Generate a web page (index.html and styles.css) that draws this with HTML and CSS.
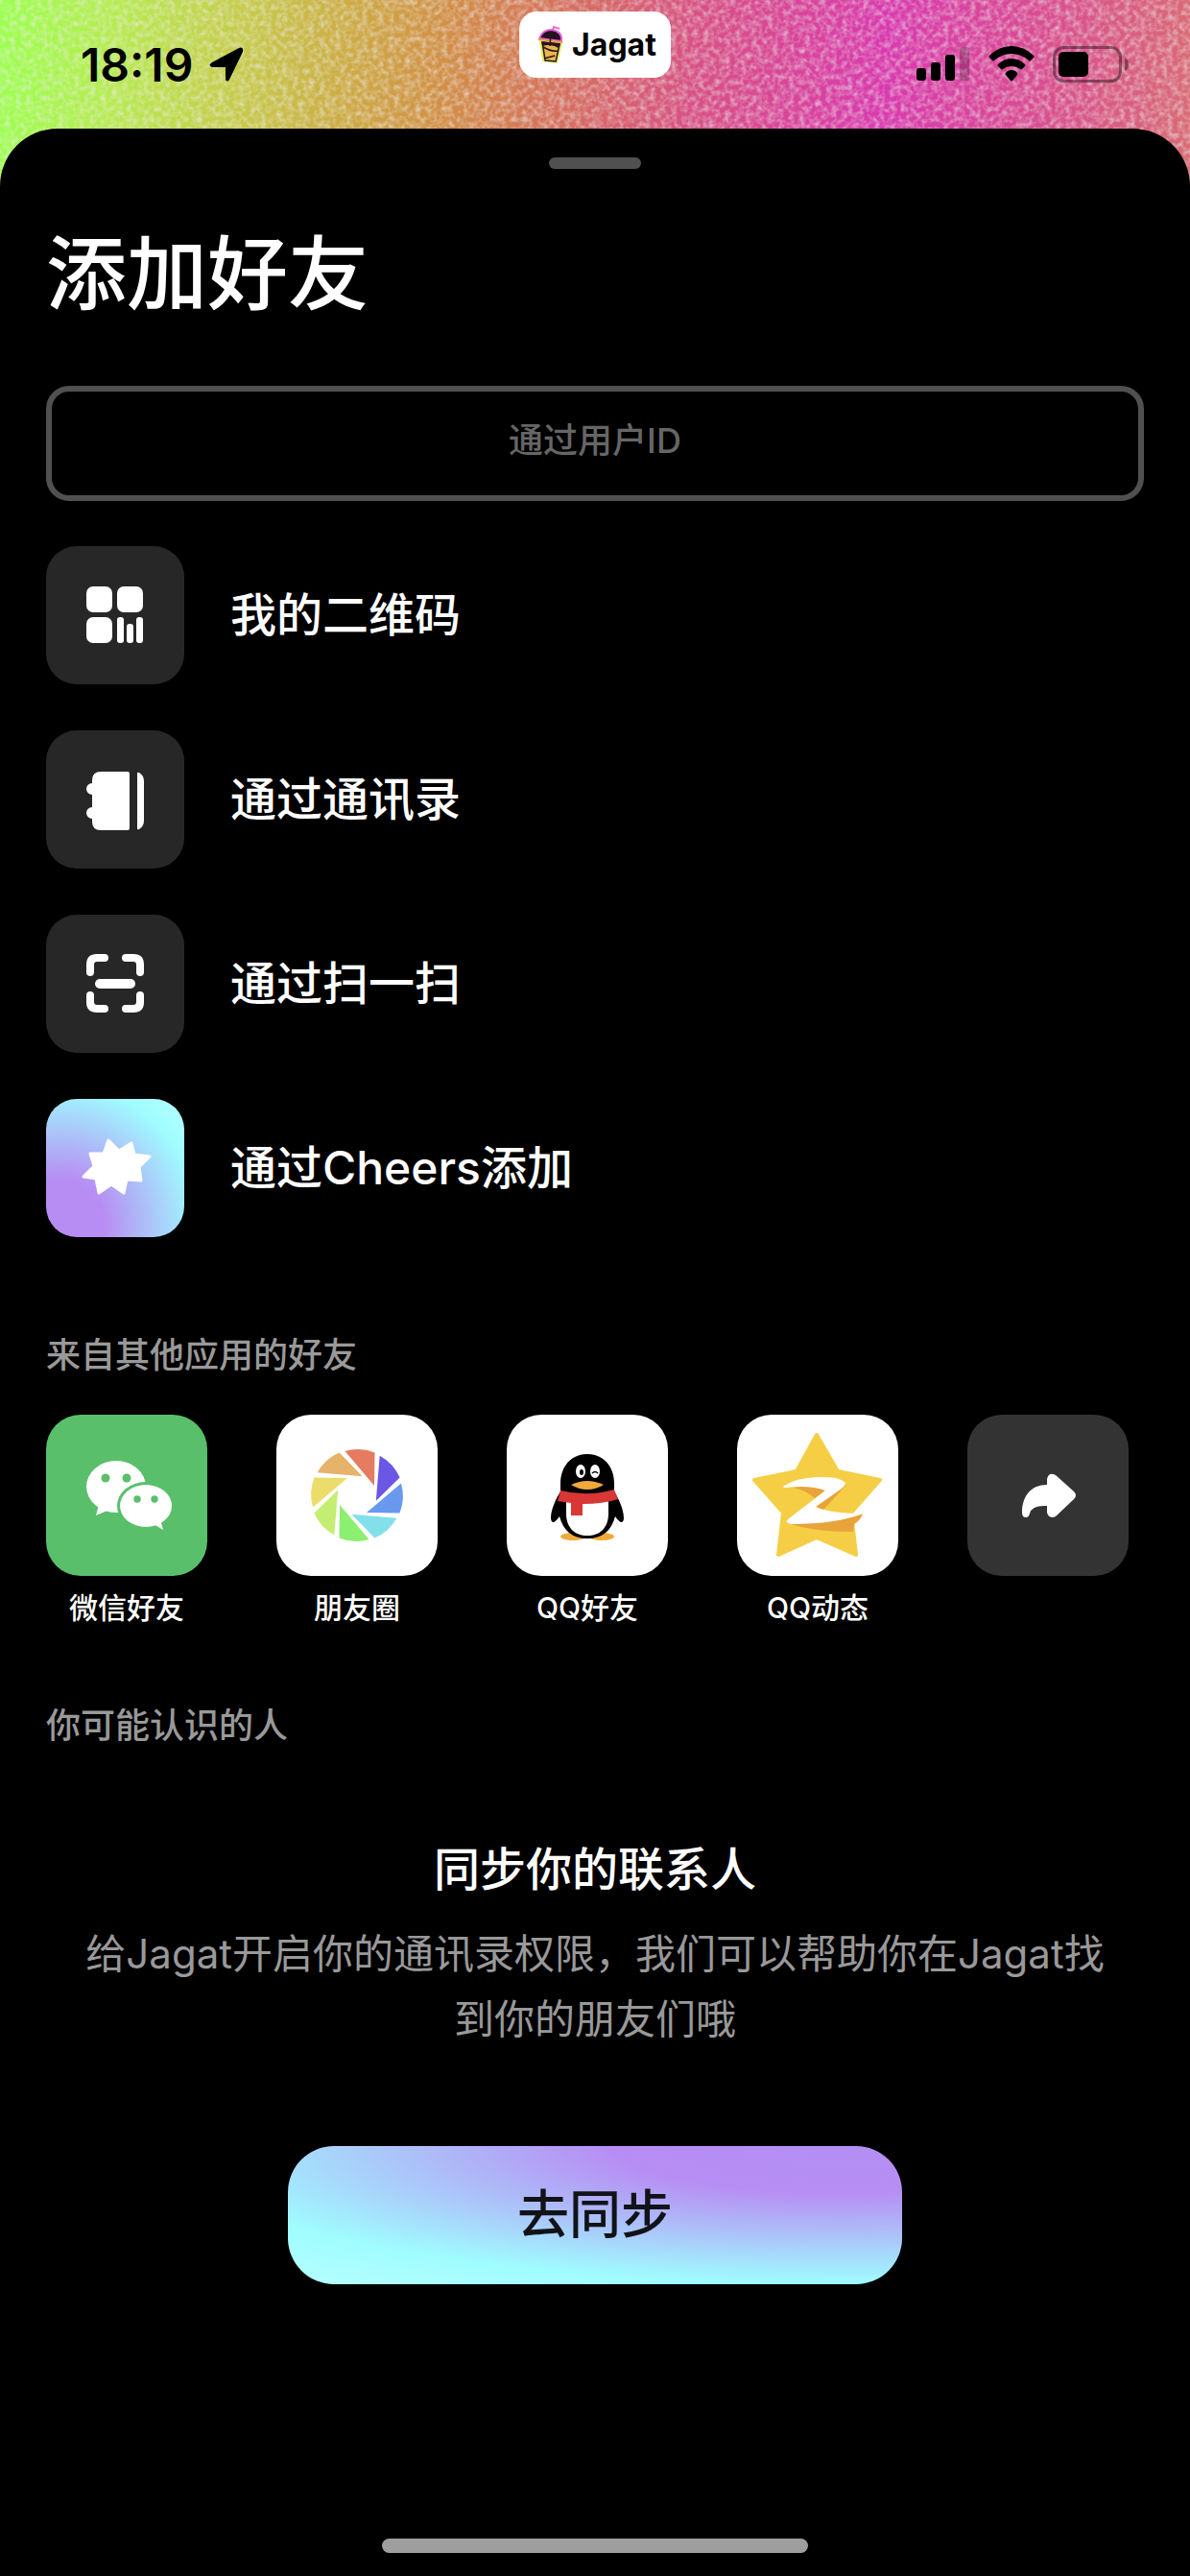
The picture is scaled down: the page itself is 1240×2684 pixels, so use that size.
FILE: index.html
```
<!DOCTYPE html>
<html lang="zh-CN">
<head>
  <meta charset="UTF-8" />
  <meta name="viewport" content="width=device-width, initial-scale=1.0"/>
  <title>添加好友 - Jagat</title>
  <link rel="stylesheet" href="styles.css">
</head>
<body>

  <svg class="backdrop" aria-hidden="true">
    <filter id="grain" x="0" y="0" width="100%" height="100%">
      <feTurbulence type="fractalNoise" baseFrequency="0.18" numOctaves="2" seed="4"/>
      <feColorMatrix values="0 0 0 0 0.85  0 0 0 0 0.85  0 0 0 0 0.85  1.2 0 0 0 -0.45"/>
    </filter>
    <rect width="100%" height="100%" filter="url(#grain)"/>
  </svg>

  <header class="status-bar">
    <div class="clock">
      <span>18:19</span>
      <svg width="38" height="38" viewBox="0 0 38 38">
        <path d="M4 17 L32 2 Q37 0 36 6 L22 35 Q20 38 18 35 V22 H4 Q-1 20 4 17 Z"/>
      </svg>
    </div>
    <div class="app-badge">
      <svg width="28" height="40" viewBox="0 0 28 40">
        <path d="M14 8 L17 1 L23 3" fill="none" stroke="#ef6ad0" stroke-width="2"/>
        <path d="M3 16 L25 18 L20 38 L6 36 Z" fill="#e9b64c" stroke="#d9ef5a" stroke-width="2"/>
        <path d="M4 16 L24 18 L22 23 Q14 18 5 21 Z" fill="#2a1420"/>
        <path d="M2 13 Q5 4 15 4 Q26 6 25 16 Z" fill="#241022" stroke="#e35fd2" stroke-width="2"/>
        <path d="M1 14 L26 17" stroke="#f0905a" stroke-width="2"/>
        <path d="M14 5 L13 21 M6 22 Q14 27 21 26 M7 34 L18 31 M5 17 L8 36 L19 37 L23 19" fill="none" stroke="#2a1420" stroke-width="1.500"/>
      </svg>
      <span>Jagat</span>
    </div>
    <div class="indicators">
      <svg width="56" height="38" viewBox="0 0 56 38">
        <rect x="0" y="23" width="10" height="13" rx="3"/>
        <rect x="15" y="17" width="10" height="19" rx="3"/>
        <rect x="30" y="9" width="10" height="27" rx="3"/>
        <rect x="45" y="1" width="10" height="35" rx="3" opacity=".2"/>
      </svg>
      <svg width="48" height="38" viewBox="0 0 48 38">
        <path d="M24 0 Q37 0 47 10 Q48 11 47 12 L44 15 Q43 16 42 15 Q34 8 24 8 Q14 8 6 15 Q5 16 4 15 L1 12 Q0 11 1 10 Q11 0 24 0 Z"/>
        <path d="M24 13 Q32 13 38 19 Q39 20 38 21 L35 24 Q34 25 33 24 Q29 21 24 21 Q19 21 15 24 Q14 25 13 24 L10 21 Q9 20 10 19 Q16 13 24 13 Z"/>
        <path d="M24 25 Q28 25 30 28 Q31 29 30 30 L25 36 Q24 37 23 36 L18 30 Q17 29 18 28 Q20 25 24 25 Z"/>
      </svg>
      <svg width="80" height="38" viewBox="0 0 80 38">
        <rect x="1.5" y="1.5" width="69" height="35" rx="10" fill="none" stroke="#000" stroke-width="3" opacity=".4"/>
        <rect x="6" y="6" width="31" height="26" rx="5"/>
        <path d="M75 12 Q79 14 79 19 Q79 24 75 26 Z" opacity=".4"/>
      </svg>
    </div>
  </header>

  <main class="sheet">
    <div class="handle"></div>
    <h1>添加好友</h1>
    <input class="user-id" type="text" placeholder="通过用户ID" aria-label="通过用户ID">

    <nav class="methods">
      <a href="#" class="method">
        <svg class="tile" viewBox="0 0 144 144">
          <rect x="42" y="42" width="27" height="27" rx="7"/>
          <rect x="74" y="42" width="27" height="27" rx="7"/>
          <rect x="42" y="74" width="27" height="27" rx="7"/>
          <rect x="74" y="74" width="7" height="27" rx="3"/>
          <rect x="84" y="81" width="7" height="20" rx="3"/>
          <rect x="94" y="74" width="7" height="27" rx="3"/>
        </svg>
        <span>我的二维码</span>
      </a>
      <a href="#" class="method">
        <svg class="tile" viewBox="0 0 144 144">
          <path d="M57 43 H85 Q87 43 87 45 V102 Q87 104 85 104 H57 Q48 104 48 95 V92 A6 6 0 0 1 48 80 V67 A6 6 0 0 1 48 55 V52 Q48 43 57 43 Z"/>
          <path d="M95 45 Q95 43 97 44 Q102 47 102 53 V94 Q102 100 97 103 Q95 104 95 102 Z"/>
        </svg>
        <span>通过通讯录</span>
      </a>
      <a href="#" class="method">
        <svg class="tile" viewBox="0 0 144 144">
          <path d="M46 60 V52 Q46 45 53 45 H61 M83 45 H91 Q98 45 98 52 V60 M98 84 V91 Q98 98 91 98 H83 M61 98 H53 Q46 98 46 91 V84" fill="none" stroke="#fff" stroke-width="8" stroke-linecap="round"/>
          <rect x="51" y="67" width="42" height="10" rx="5"/>
        </svg>
        <span>通过扫一扫</span>
      </a>
      <a href="#" class="method">
        <svg class="tile tile-cheers" viewBox="0 0 144 144">
          <path d="M65 43 L76 54 L89 46 L92 58 L108 60 L97 71 L99 85 L84 84 L81 98 L68 89 L55 98 L52 83 L39 81 L50 70 L46 57 L60 57 Z" stroke="#fff" stroke-width="3" stroke-linejoin="round"/>
        </svg>
        <span>通过Cheers添加</span>
      </a>
    </nav>

    <h2>来自其他应用的好友</h2>
    <div class="apps">
      <a href="#" class="app">
        <svg class="app-icon wechat" viewBox="0 0 168 168">
          <ellipse cx="73" cy="75" rx="31" ry="27"/>
          <path d="M55 94 L52 105 L66 99 Z"/>
          <ellipse cx="104" cy="95" rx="30" ry="25" fill="#5abf6b"/>
          <ellipse cx="104" cy="95" rx="27" ry="22"/>
          <path d="M112 114 L122 120 L119 109 Z"/>
          <g fill="#5abf6b">
            <circle cx="62" cy="66" r="4.5"/>
            <circle cx="84" cy="66" r="4.5"/>
            <circle cx="95" cy="88" r="3.7"/>
            <circle cx="113" cy="88" r="3.7"/>
          </g>
        </svg>
        <span>微信好友</span>
      </a>
      <a href="#" class="app">
        <svg class="app-icon" viewBox="0 0 168 168">
          <defs>
            <path id="blade" d="M71.5 38 A48 48 0 0 1 102.500 39.500 L102 74 Z"/>
          </defs>
          <use href="#blade" fill="#e57b61"/>
          <use href="#blade" fill="#6a57e6" transform="rotate(45 84 84)"/>
          <use href="#blade" fill="#6899ef" transform="rotate(90 84 84)"/>
          <use href="#blade" fill="#83e0ea" transform="rotate(135 84 84)"/>
          <use href="#blade" fill="#8bef70" transform="rotate(180 84 84)"/>
          <use href="#blade" fill="#c4ee72" transform="rotate(225 84 84)"/>
          <use href="#blade" fill="#ecdc6c" transform="rotate(270 84 84)"/>
          <use href="#blade" fill="#e6b36a" transform="rotate(315 84 84)"/>
        </svg>
        <span>朋友圈</span>
      </a>
      <a href="#" class="app">
        <svg class="app-icon" viewBox="0 0 168 168">
          <ellipse cx="69" cy="127" rx="13" ry="4" fill="#f0a93a"/>
          <ellipse cx="99" cy="127" rx="13" ry="4" fill="#f0a93a"/>
          <path d="M84 41 C101 41 112 54 112 72 V80 C117 88 122 99 122 108 Q121 117 113 106 Q107 129 84 129 Q61 129 55 106 Q47 117 46 108 C46 99 51 88 56 80 V72 C56 54 67 41 84 41 Z" fill="#000"/>
          <path d="M62 88 H106 V103 C106 118 97 126 84 126 C71 126 62 118 62 103 Z"/>
          <path d="M56 79 Q84 86 112 78 L116 88 Q101 93 79 93 V105 H67 V92 Q59 91 53 90 Z" fill="#d93636"/>
          <path d="M67 73 Q76 69 84 69 Q92 69 101 73 Q93 78 84 78 Q75 78 67 73 Z" fill="#f0a93a"/>
          <ellipse cx="77" cy="59" rx="5" ry="7"/>
          <ellipse cx="92" cy="59" rx="5" ry="7"/>
          <ellipse cx="78" cy="60" rx="2" ry="3" fill="#000"/>
          <path d="M89 61 Q92 58 95 61" fill="none" stroke="#000" stroke-width="1.500"/>
        </svg>
        <span>QQ好友</span>
      </a>
      <a href="#" class="app">
        <svg class="app-icon" viewBox="0 0 168 168">
          <path d="M83 21 L105 59 L149 68 L119 102 L124 146 L83 128 L43 146 L48 102 L18 68 L62 59 Z" fill="#f5ce45" stroke="#f5ce45" stroke-width="4" stroke-linejoin="round"/>
          <path d="M58 76 Q77 73 92 79 L81 87 Q71 78 58 76 Z" fill="#e8a33b"/>
          <path d="M114 73 L90 99 L82 96 L108 74 Z" fill="#e8a33b"/>
          <path d="M53 113 Q103 114 131 103 Q129 110 122 114 L121 122 Q79 122 53 113 Z" fill="#e8a33b"/>
          <path d="M49 74 Q61 66 84 65 Q107 64 113 71 Q113 74 109 77 L82 96 Q97 103 131 103 Q103 114 57 114 Q49 113 53 109 L92 79 Q77 73 50 76 Q47 76 49 74 Z"/>
        </svg>
        <span>QQ动态</span>
      </a>
      <button type="button" class="app" aria-label="更多分享方式">
        <svg class="app-icon share" viewBox="0 0 168 168">
          <path d="M83 73 V67 Q85 59 92 63 L111 80 Q115 84 111 88 L92 106 Q85 109 83 102 V95 Q67 94 65 103 Q64 107 61 107 Q57 107 57 102 C57 84 67 73 83 73 Z"/>
        </svg>
      </button>
    </div>

    <h2>你可能认识的人</h2>
    <section class="sync">
      <h3>同步你的联系人</h3>
      <p>给Jagat开启你的通讯录权限，我们可以帮助你在Jagat找到你的朋友们哦</p>
      <button type="button" class="sync-button">去同步</button>
    </section>

    <div class="home-indicator"></div>
  </main>

</body>
</html>
```

FILE: styles.css
```
* {
  box-sizing: border-box;
}

body {
  margin: 0;
  min-height: 100vh;
  display: flex;
  flex-direction: column;
  position: relative;
  font-family: Inter, "Noto Sans CJK SC", sans-serif;
  font-weight: 500;
  background-color: #000;
  color: #fff;
}

a {
  color: inherit;
  text-decoration: none;
}

button {
  border: none;
  padding: 0;
  background: none;
  font: inherit;
  cursor: pointer;
}

svg {
  display: block;
  flex-shrink: 0;
}

/* Fond dégradé derrière la barre d'état */
.backdrop {
  position: absolute;
  top: 0;
  left: 0;
  width: 100%;
  height: 200px;
  z-index: -1;
  background: linear-gradient(94deg, #9cff50 0%, #b8ea52 10%, #c6cc4c 20%, #cdac45 29%, #d29046 37%, #d6705e 47%, #d85184 58%, #d93aae 74%, #d94b92 86%, #d96c74 100%);
}

.status-bar {
  height: 134px;
  padding: 0 63px 0 84px;
  display: flex;
  justify-content: space-between;
  align-items: center;
  color: #000;
}

.clock {
  display: flex;
  align-items: center;
  gap: 16px;
  font-size: 48px;
  font-weight: 600;
}

.app-badge {
  position: absolute;
  top: 12px;
  left: 50%;
  transform: translateX(-50%);
  height: 69px;
  padding: 0 15px 0 19px;
  display: flex;
  align-items: center;
  gap: 8px;
  border-radius: 18px;
  background-color: #fff;
  font-size: 32px;
  font-weight: 700;
}

.indicators {
  display: flex;
  align-items: center;
  gap: 19px;
}

.sheet {
  flex: 1;
  display: flex;
  flex-direction: column;
  padding: 30px 48px 24px;
  border-radius: 60px 60px 0 0;
  background-color: #000;
}

.handle {
  align-self: center;
  width: 96px;
  height: 12px;
  border-radius: 6px;
  background-color: #505050;
}

h1 {
  margin: 60px 0 66px;
  font-size: 84px;
  line-height: 100px;
  font-weight: 500;
}

.user-id {
  width: 100%;
  height: 120px;
  padding: 0 24px 6px;
  border: 6px solid #505050;
  border-radius: 24px;
  background: none;
  color: #fff;
  font: inherit;
  font-size: 36px;
  text-align: center;
}

.user-id::placeholder {
  color: #666;
  opacity: 1;
}

.methods {
  display: flex;
  flex-direction: column;
  gap: 48px;
  margin: 47px 0 99px;
}

.method {
  display: flex;
  align-items: center;
  gap: 48px;
  font-size: 48px;
  line-height: 64px;
}

.tile {
  width: 144px;
  height: 144px;
  border-radius: 32px;
  background-color: #272727;
  fill: #fff;
}

.tile-cheers {
  background: radial-gradient(ellipse 100% 100% at 10% 90%, #b78df3 0%, #b78df3 32%, #9ffcff 100%, #b5ffff 125%);
}

h2 {
  margin: 0;
  font-size: 36px;
  line-height: 48px;
  font-weight: 500;
  color: #999;
}

.apps {
  display: flex;
  gap: 72px;
  margin: 38px 0 79px;
}

.app {
  display: flex;
  flex-direction: column;
  align-items: center;
  gap: 13px;
  font-size: 30px;
  line-height: 40px;
}

.app-icon {
  width: 168px;
  height: 168px;
  border-radius: 36px;
  background-color: #fff;
  fill: #fff;
}

.wechat {
  background-color: #5abf6b;
}

.share {
  background-color: #333;
}

.sync {
  display: flex;
  flex-direction: column;
  align-items: center;
  margin: 94px 0 48px;
  text-align: center;
}

h3 {
  margin: 0;
  font-size: 48px;
  line-height: 64px;
  font-weight: 500;
}

.sync p {
  margin: 22px 0 98px;
  padding: 0 24px;
  font-size: 42px;
  line-height: 68px;
  font-weight: 400;
  color: #999;
}

.sync-button {
  width: 56%;
  height: 144px;
  border-radius: 48px;
  background: radial-gradient(ellipse 115% 105% at 90% 0%, #b38ff3 0%, #b78df3 32%, #9ffcff 95%, #b8fffd 125%);
  color: #111318;
  font-size: 54px;
  line-height: 64px;
}

.home-indicator {
  align-self: center;
  width: 444px;
  height: 15px;
  margin-top: auto;
  border-radius: 8px;
  background-color: #9e9e9e;
}

@media (max-width: 1180px) {
  .apps {
    flex-wrap: wrap;
    gap: 40px;
  }
}
```
